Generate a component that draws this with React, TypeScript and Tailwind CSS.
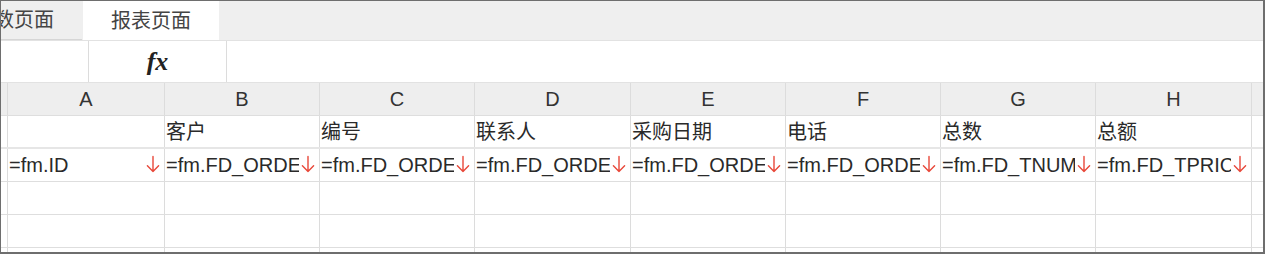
const cols = ["A", "B", "C", "D", "E", "F", "G", "H"]
const titles = ["", "客户", "编号", "联系人", "采购日期", "电话", "总数", "总额"]
const formulas = [
  "=fm.ID",
  "=fm.FD_ORDER_CUSTOMER",
  "=fm.FD_ORDER_NO",
  "=fm.FD_ORDER_CONTACT",
  "=fm.FD_ORDER_DATE",
  "=fm.FD_ORDER_PHONE",
  "=fm.FD_TNUM",
  "=fm.FD_TPRICE",
]

const gridCols = "grid grid-cols-[7px_157px_155px_155px_156px_155px_155px_155px_156px_1fr]"
const font = { fontFamily: '"Liberation Sans", "Noto Sans CJK SC", sans-serif' }

// the red arrow sits on a white box that hides the end of the text
function DownArrow() {
  return (
    <div className="absolute right-0 top-0 bottom-0 w-[20px] bg-white flex items-start justify-end pt-[6px] pr-[4px]">
      <svg width="14" height="18" viewBox="0 0 14 18" fill="none">
        <path d="M7 1.5V16.5M1.4 10.8L7 16.5L12.6 10.8" stroke="#e8483a" strokeWidth="1.4" strokeLinecap="round" strokeLinejoin="round" />
      </svg>
    </div>
  )
}

function BlankRow() {
  return (
    <div className={`${gridCols} h-[33px] border-b border-[#dedede]`}>
      <div className="border-r border-[#dcdcdc]" />
      {cols.map((c) => (
        <div key={c} className="border-r border-[#dcdcdc]" />
      ))}
      <div />
    </div>
  )
}

export default function App() {
  return (
    <div
      className="w-[1265px] h-[254px] overflow-hidden bg-white border-l border-t border-r-2 border-b-2 border-[#6e6e6e] text-[20px] text-[#2a2a2a]"
      style={font}
    >
      {/* tabs */}
      <div className="flex h-[39px] bg-[#efefef]">
        <div className="ml-[-55px] w-[136px] shrink-0 flex items-center justify-center border-b border-[#d6d6d6] text-[#444]">
          参数页面
        </div>
        <div className="ml-[1px] w-[136px] shrink-0 flex items-center justify-center bg-white text-[#444]">
          报表页面
        </div>
        <div className="flex-1" />
      </div>

      {/* formula bar */}
      <div className="flex h-[43px] border-t border-[#e2e2e2] border-b border-b-[#e2e2e2]">
        <div className="w-[88px] border-r border-[#dcdcdc]" />
        <div className="w-[138px] border-r border-[#dcdcdc] flex items-center justify-center">
          <span className="italic font-bold text-[26px] text-[#222]" style={{ fontFamily: '"Liberation Serif", serif' }}>
            fx
          </span>
        </div>
        <div className="flex-1" />
      </div>

      {/* column header */}
      <div className={`${gridCols} h-[33px] bg-[#eeeeee] border-b border-[#dedede]`}>
        <div className="border-r border-[#dcdcdc]" />
        {cols.map((c) => (
          <div key={c} className="border-r border-[#dcdcdc] flex items-center justify-center text-[#333]">
            {c}
          </div>
        ))}
        <div />
      </div>

      {/* row 1 */}
      <div className={`${gridCols} h-[33px] border-b-2 border-[#e6e6e6]`}>
        <div className="border-r border-[#dcdcdc]" />
        {titles.map((t, i) => (
          <div key={i} className="border-r border-[#dcdcdc] flex items-center pl-[1px] whitespace-nowrap overflow-hidden">
            {t}
          </div>
        ))}
        <div />
      </div>

      {/* row 2 */}
      <div className={`${gridCols} h-[33px] border-b border-[#dedede]`}>
        <div className="border-r border-[#dcdcdc]" />
        {formulas.map((f, i) => (
          <div key={i} className="relative border-r border-[#dcdcdc] flex items-center pl-[1px] whitespace-nowrap overflow-hidden">
            {f}
            <DownArrow />
          </div>
        ))}
        <div />
      </div>

      <BlankRow />
      <BlankRow />
      <BlankRow />
    </div>
  )
}
